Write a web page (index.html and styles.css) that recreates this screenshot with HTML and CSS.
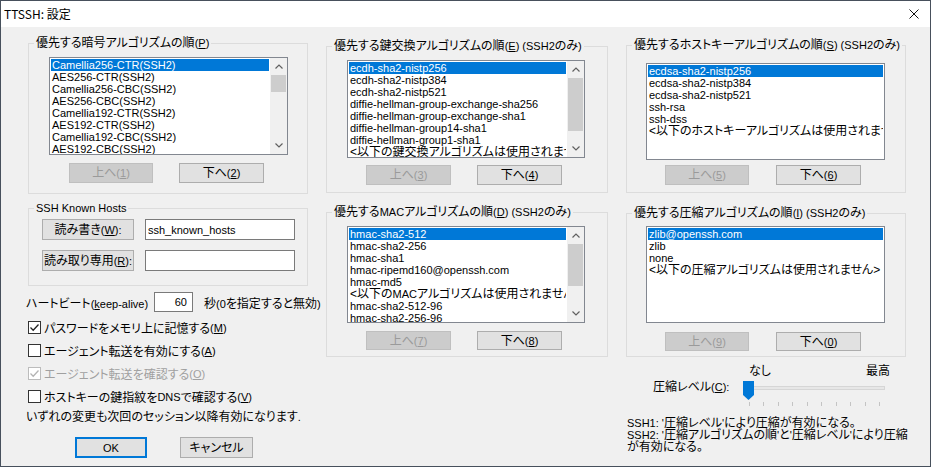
FILE: index.html
```html
<!DOCTYPE html>
<html lang="ja">
<head>
<meta charset="utf-8">
<title>TTSSH: 設定</title>
<link rel="stylesheet" href="styles.css">
</head>
<body>
<div class="win">
  <div class="titlebar">
    <span class="title">TTSSH: 設定</span>
    <svg class="close" width="10" height="10" viewBox="0 0 10 10"><path d="M0.5 0.5L9.5 9.5M9.5 0.5L0.5 9.5" stroke="#111" stroke-width="1" fill="none"/></svg>
  </div>
  <div class="main">
    <!-- column 1 -->
    <div class="col">
      <fieldset class="grp grp-p">
        <legend>優先する暗号アルゴリズムの順<span class="l">(<u>P</u>)</span></legend>
        <div class="lb lb-p">
          <div class="items">
            <div class="it sel">Camellia256-CTR(SSH2)</div>
            <div class="it">AES256-CTR(SSH2)</div>
            <div class="it">Camellia256-CBC(SSH2)</div>
            <div class="it">AES256-CBC(SSH2)</div>
            <div class="it">Camellia192-CTR(SSH2)</div>
            <div class="it">AES192-CTR(SSH2)</div>
            <div class="it">Camellia192-CBC(SSH2)</div>
            <div class="it">AES192-CBC(SSH2)</div>
            <div class="it">Camellia128-CTR(SSH2)</div>
            <div class="it">AES128-CTR(SSH2)</div>
          </div>
          <div class="sb">
            <div class="arr"><svg width="8" height="5" viewBox="0 0 8 5"><path d="M0.5 4.5L4 1L7.5 4.5" stroke="#606060" stroke-width="1.2" fill="none"/></svg></div>
            <div class="trk"><div class="thumb" style="height:17px"></div></div>
            <div class="arr"><svg width="8" height="5" viewBox="0 0 8 5"><path d="M0.5 0.5L4 4L7.5 0.5" stroke="#606060" stroke-width="1.2" fill="none"/></svg></div>
          </div>
        </div>
        <div class="btns">
          <button class="btn dis w84">上へ<span class="l">(<u>1</u>)</span></button>
          <button class="btn w85">下へ<span class="l">(<u>2</u>)</span></button>
        </div>
      </fieldset>

      <fieldset class="grp grp-kh">
        <legend><span class="l">SSH Known Hosts</span></legend>
        <div class="kh-row first">
          <button class="btn kh-btn">読み書き<span class="l">(<u>W</u>):</span></button>
          <input class="edit kh-edit" type="text" value="ssh_known_hosts">
        </div>
        <div class="kh-row second">
          <button class="btn kh-btn">読み取り専用<span class="l">(<u>R</u>):</span></button>
          <input class="edit kh-edit" type="text" value="">
        </div>
      </fieldset>

      <div class="hb">
        <span class="hb-label">ハートビート<span class="l">(<u>k</u>eep-alive)</span></span>
        <input class="edit num" type="text" value="60">
        <span class="hb-note">秒<span class="l">(0</span>を指定すると無効<span class="l">)</span></span>
      </div>

      <div class="chks">
        <div class="chk"><span class="box"><svg width="11" height="11" viewBox="0 0 11 11"><path d="M1.5 5.5L4.2 8.2L9.5 2.5" stroke="#222" stroke-width="1.3" fill="none"/></svg></span>パスワードをメモリ上に記憶する<span class="l">(<u>M</u>)</span></div>
        <div class="chk"><span class="box"></span>エージェント転送を有効にする<span class="l">(<u>A</u>)</span></div>
        <div class="chk dis"><span class="box"><svg width="11" height="11" viewBox="0 0 11 11"><path d="M1.5 5.5L4.2 8.2L9.5 2.5" stroke="#b4b4b4" stroke-width="1.3" fill="none"/></svg></span>エージェント転送を確認する<span class="l">(<u>O</u>)</span></div>
        <div class="chk"><span class="box"></span>ホストキーの鍵指紋を<span class="l">DNS</span>で確認する<span class="l">(<u>V</u>)</span></div>
      </div>

      <div class="note">いずれの変更も次回のセッション以降有効になります<span class="l">.</span></div>

      <div class="dlg-btns">
        <button class="btn def ok"><span class="l">OK</span></button>
        <button class="btn cancel">キャンセル</button>
      </div>
    </div>

    <!-- column 2 -->
    <div class="col">
      <fieldset class="grp grp-e">
        <legend>優先する鍵交換アルゴリズムの順<span class="l">(<u>E</u>) (SSH2</span>のみ<span class="l">)</span></legend>
        <div class="lb lb-e">
          <div class="items">
            <div class="it sel">ecdh-sha2-nistp256</div>
            <div class="it">ecdh-sha2-nistp384</div>
            <div class="it">ecdh-sha2-nistp521</div>
            <div class="it">diffie-hellman-group-exchange-sha256</div>
            <div class="it">diffie-hellman-group-exchange-sha1</div>
            <div class="it">diffie-hellman-group14-sha1</div>
            <div class="it">diffie-hellman-group1-sha1</div>
            <div class="it ja">&lt;以下の鍵交換アルゴリズムは使用されません&gt;</div>
          </div>
          <div class="sb">
            <div class="arr"><svg width="8" height="5" viewBox="0 0 8 5"><path d="M0.5 4.5L4 1L7.5 4.5" stroke="#606060" stroke-width="1.2" fill="none"/></svg></div>
            <div class="trk"><div class="thumb" style="height:53px"></div></div>
            <div class="arr"><svg width="8" height="5" viewBox="0 0 8 5"><path d="M0.5 0.5L4 4L7.5 0.5" stroke="#606060" stroke-width="1.2" fill="none"/></svg></div>
          </div>
        </div>
        <div class="btns">
          <button class="btn dis w85">上へ<span class="l">(<u>3</u>)</span></button>
          <button class="btn w85">下へ<span class="l">(<u>4</u>)</span></button>
        </div>
      </fieldset>

      <fieldset class="grp grp-d">
        <legend>優先する<span class="l">MAC</span>アルゴリズムの順<span class="l">(<u>D</u>) (SSH2</span>のみ<span class="l">)</span></legend>
        <div class="lb lb-d">
          <div class="items">
            <div class="it sel">hmac-sha2-512</div>
            <div class="it">hmac-sha2-256</div>
            <div class="it">hmac-sha1</div>
            <div class="it">hmac-ripemd160@openssh.com</div>
            <div class="it">hmac-md5</div>
            <div class="it ja">&lt;以下の<span class="l">MAC</span>アルゴリズムは使用されません&gt;</div>
            <div class="it">hmac-sha2-512-96</div>
            <div class="it">hmac-sha2-256-96</div>
            <div class="it">hmac-sha1-96</div>
          </div>
          <div class="sb">
            <div class="arr"><svg width="8" height="5" viewBox="0 0 8 5"><path d="M0.5 4.5L4 1L7.5 4.5" stroke="#606060" stroke-width="1.2" fill="none"/></svg></div>
            <div class="trk"><div class="thumb" style="height:42px"></div></div>
            <div class="arr"><svg width="8" height="5" viewBox="0 0 8 5"><path d="M0.5 0.5L4 4L7.5 0.5" stroke="#606060" stroke-width="1.2" fill="none"/></svg></div>
          </div>
        </div>
        <div class="btns">
          <button class="btn dis w85">上へ<span class="l">(<u>7</u>)</span></button>
          <button class="btn w85">下へ<span class="l">(<u>8</u>)</span></button>
        </div>
      </fieldset>
    </div>

    <!-- column 3 -->
    <div class="col">
      <fieldset class="grp grp-s">
        <legend>優先するホストキーアルゴリズムの順<span class="l">(<u>S</u>) (SSH2</span>のみ<span class="l">)</span></legend>
        <div class="lb lb-s">
          <div class="items">
            <div class="it sel">ecdsa-sha2-nistp256</div>
            <div class="it">ecdsa-sha2-nistp384</div>
            <div class="it">ecdsa-sha2-nistp521</div>
            <div class="it">ssh-rsa</div>
            <div class="it">ssh-dss</div>
            <div class="it ja">&lt;以下のホストキーアルゴリズムは使用されません&gt;</div>
          </div>
        </div>
        <div class="btns">
          <button class="btn dis w84">上へ<span class="l">(<u>5</u>)</span></button>
          <button class="btn w85">下へ<span class="l">(<u>6</u>)</span></button>
        </div>
      </fieldset>

      <fieldset class="grp grp-i">
        <legend>優先する圧縮アルゴリズムの順<span class="l">(<u>I</u>) (SSH2</span>のみ<span class="l">)</span></legend>
        <div class="lb lb-i">
          <div class="items">
            <div class="it sel">zlib@openssh.com</div>
            <div class="it">zlib</div>
            <div class="it">none</div>
            <div class="it ja">&lt;以下の圧縮アルゴリズムは使用されません&gt;</div>
          </div>
        </div>
        <div class="btns">
          <button class="btn dis w84">上へ<span class="l">(<u>9</u>)</span></button>
          <button class="btn w85">下へ<span class="l">(<u>0</u>)</span></button>
        </div>
      </fieldset>

      <div class="cmp-ends"><span>なし</span><span>最高</span></div>
      <div class="cmp-row">
        <span class="cmp-label">圧縮レベル<span class="l">(<u>C</u>):</span></span>
        <div class="slider">
          <div class="track"></div>
          <div class="ticks"><i></i><i></i><i></i><i></i><i></i><i></i><i></i><i></i><i></i><i></i></div>
          <svg class="knob" width="11" height="19" viewBox="0 0 11 19"><path d="M0 0H11V14L5.5 19L0 14Z" fill="#0078d7"/></svg>
        </div>
      </div>
      <div class="cmp-note"><span class="l">SSH1: '</span>圧縮レベル<span class="l">'</span>により圧縮が有効になる。<br><span class="l">SSH2: '</span>圧縮アルゴリズムの順<span class="l">'</span>と<span class="l">'</span>圧縮レベル<span class="l">'</span>により圧縮<br>が有効になる。</div>
    </div>
  </div>
</div>
</body>
</html>
```

FILE: styles.css
```css
* { box-sizing: border-box; }
html, body { margin: 0; padding: 0; }
body {
  font-family: "Liberation Sans", "Noto Sans CJK JP", sans-serif;
  font-size: 12px;
  color: #000;
  background: #f0f0f0;
  font-feature-settings: "palt";
}
u { text-decoration: underline; text-underline-offset: 1px; }
.l { font-size: 11px; }

.win {
  width: 931px;
  height: 467px;
  border: 1px solid #47505c;
  background: #f0f0f0;
  overflow: hidden;
  display: flex;
  flex-direction: column;
}
.titlebar {
  flex: none;
  height: 26px;
  background: #fff;
  display: flex;
  align-items: center;
  justify-content: space-between;
  padding: 0 11px 0 3px;
}
.title {
  font-family: "Noto Sans CJK JP", sans-serif;
  font-size: 12px;
  line-height: 14px;
  font-feature-settings: normal;
}

.main {
  display: grid;
  grid-template-columns: 282px 282px 280px;
  column-gap: 18px;
  padding: 10px 0 0 25px;
  align-items: start;
}
.col {
  display: flex;
  flex-direction: column;
  align-items: flex-start;
}

/* group boxes */
.grp {
  margin: 0;
  padding: 0;
  border: 1px solid #dcdcdc;
  min-width: 0;
}
.grp > legend {
  margin-left: 5px;
  padding: 0 2px;
  font-size: 12px;
  line-height: 12px;
  white-space: nowrap;
}
.grp-p { width: 280px; margin-left: 2px; padding-bottom: 10px; }
.grp-kh { width: 280px; margin-left: 2px; margin-top: 8px; padding-bottom: 14px; }
.grp-e { width: 282px; margin-top: 3px; padding-bottom: 7px; }
.grp-d { width: 282px; margin-top: 13px; padding-bottom: 6px; }
.grp-s { width: 280px; margin-top: 2px; padding-bottom: 7px; }
.grp-i { width: 280px; margin-top: 14px; padding-bottom: 5px; }

/* list boxes */
.lb {
  display: flex;
  border: 1px solid #828790;
  background: #fff;
  height: 98px;
}
.lb-p { width: 239px; margin: 8px 0 0 20px; }
.lb-e { width: 238px; margin: 8px 0 0 20px; }
.lb-d { width: 238px; margin: 8px 0 0 20px; height: 97px; }
.lb-s { width: 239px; margin: 12px 0 0 19px; height: 97px; }
.lb-i { width: 239px; margin: 7px 0 0 19px; height: 97px; }

.items {
  flex: 1;
  min-width: 0;
  overflow: hidden;
  padding: 1px;
}
.it {
  height: 12px;
  line-height: 12px;
  font-size: 11px;
  padding-left: 1px;
  white-space: nowrap;
  overflow: hidden;
}
.it.ja { font-size: 12px; }
.it.sel { background: #0078d7; color: #fff; }

.sb {
  flex: none;
  width: 17px;
  background: #f0f0f0;
  display: flex;
  flex-direction: column;
}
.arr {
  height: 17px;
  flex: none;
  display: flex;
  align-items: center;
  justify-content: center;
}
.trk { flex: 1; padding: 0 1px; }
.thumb { background: #cdcdcd; }

/* buttons */
.btn {
  font-family: "Liberation Sans", "Noto Sans CJK JP", sans-serif;
  font-size: 12px;
  font-feature-settings: "palt";
  line-height: 14px;
  height: 20px;
  padding: 0;
  margin: 0;
  border: 1px solid #adadad;
  background: #e1e1e1;
  color: #000;
  white-space: nowrap;
}
.btn.dis { background: #cccccc; border-color: #bfbfbf; color: #9a9a9a; }
.btn.def { border: 2px solid #0078d7; }
.w84 { width: 84px; }
.w85 { width: 85px; }

.btns { display: flex; }
.grp-p .btns { margin: 8px 0 0 40px; gap: 26px; }
.grp-e .btns { margin: 7px 0 0 39px; gap: 26px; }
.grp-d .btns { margin: 8px 0 0 39px; gap: 26px; }
.grp-d .btn { height: 19px; }
.grp-s .btns { margin: 5px 0 0 38px; gap: 27px; }
.grp-i .btns { margin: 9px 0 0 38px; gap: 27px; }
.grp-i .btn { height: 19px; }

/* known hosts */
.kh-row { display: flex; align-items: flex-start; margin-left: 13px; }
.kh-row.first { margin-top: 5px; }
.kh-row.second { margin-top: 10px; }
.kh-btn { width: 92px; height: 21px; }
.edit {
  font-family: "Liberation Sans", "Noto Sans CJK JP", sans-serif;
  font-size: 11px;
  border: 1px solid #7a7a7a;
  background: #fff;
  color: #000;
  margin: 0;
  outline: none;
}
.kh-edit { width: 150px; height: 21px; margin-left: 11px; padding: 0 2px; }

/* heartbeat */
.hb { display: flex; align-items: center; height: 20px; margin-top: 6px; }
.hb-label { width: 128px; white-space: nowrap; }
.edit.num { width: 39px; height: 20px; text-align: right; padding: 0 5px 0 0; }
.hb-note { margin-left: 11px; white-space: nowrap; }

/* checkboxes */
.chks { margin-top: 4px; }
.chk {
  display: flex;
  align-items: center;
  height: 23px;
  padding-left: 2px;
  white-space: nowrap;
}
.box {
  flex: none;
  width: 13px;
  height: 13px;
  border: 1px solid #333;
  background: #fff;
  margin-right: 3px;
  display: flex;
  align-items: center;
  justify-content: center;
}
.chk.dis { color: #a0a0a0; }
.chk.dis .box { border-color: #bcbcbc; }

.note { line-height: 18px; white-space: nowrap; }

.dlg-btns { display: flex; margin-top: 11px; padding-left: 49px; gap: 33px; }
.ok { width: 72px; height: 21px; }
.cancel { width: 73px; height: 21px; }

/* compression level */
.cmp-ends {
  display: flex;
  justify-content: space-between;
  width: 141px;
  margin: 7px 0 0 123px;
  line-height: 14px;
  white-space: nowrap;
}
.cmp-row { display: flex; align-items: flex-start; height: 30px; }
.cmp-label {
  width: 90px;
  margin: 2px 0 0 27px;
  line-height: 14px;
  white-space: nowrap;
}
.slider {
  position: relative;
  width: 142px;
  height: 30px;
  display: flex;
  flex-direction: column;
}
.track {
  margin: 8px 0 0 1px;
  height: 4px;
  background: #e7e7e7;
  border: 1px solid #d6d6d6;
}
.ticks {
  display: flex;
  justify-content: space-between;
  width: 131px;
  margin: 12px 0 0 6px;
}
.ticks i { display: block; width: 1px; height: 4px; background: #c4c4c4; }
.knob { position: absolute; left: 0; top: 3px; }

.cmp-note {
  margin: 9px 0 0 1px;
  line-height: 12px;
  white-space: nowrap;
}
```
